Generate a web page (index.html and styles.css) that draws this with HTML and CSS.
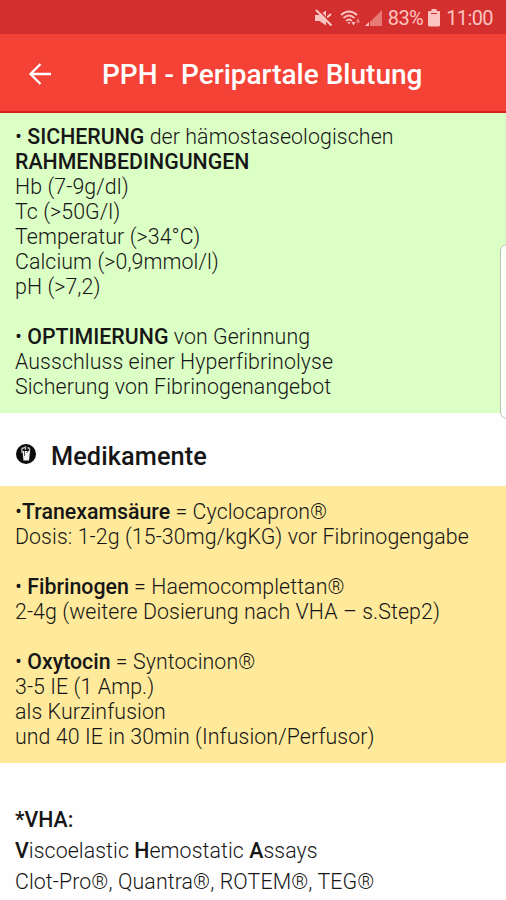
FILE: index.html
```html
<!DOCTYPE html>
<html lang="de">
  <head>
    <meta charset="UTF-8" />
    <title>PPH - Peripartale Blutung</title>
    <link rel="stylesheet" href="styles.css">
  </head>

  <body>
    <div class="status-bar">
      <svg class="icon-mute" width="18" height="18" viewBox="0 0 18 18">
        <path d="M0 6h4.500L11 1.500v15L4.500 12H0z" fill="currentColor" />
        <path d="M12 8.500l4-3.500" stroke="currentColor" stroke-width="2" />
        <path d="M2.500 0l15 15" stroke="#d32f2f" stroke-width="1.500" />
        <path d="M1 1l15.500 15.500" stroke="currentColor" stroke-width="2.200" />
      </svg>
      <svg class="icon-wifi" width="22" height="18" viewBox="0 0 22 18">
        <g fill="none" stroke="currentColor" stroke-width="1.700">
          <path d="M1 6q8-7 16 0" />
          <path d="M3.500 9q5.500-5 11 0" />
          <path d="M6 12q3-3 6 0" />
        </g>
        <path d="M7.500 13h3L9 15.500zM11.500 13h4l-2 3.500z" fill="currentColor" />
        <path d="M16 12.500l2-3.500 2 3.500-2 2z" fill="currentColor" opacity=".5" />
      </svg>
      <svg class="icon-signal" width="17" height="18" viewBox="0 0 17 18">
        <path d="M17 1v16H5V13z" fill="currentColor" opacity=".5" />
        <path d="M4 13v4H0z" fill="currentColor" />
      </svg>
      <span class="battery-level">83%</span>
      <svg class="icon-battery" width="12" height="18" viewBox="0 0 12 18">
        <path d="M3.500 0h5v2H11q1 0 1 1v13q0 1.500-1.500 1.500h-9Q0 17.500 0 16V3q0-1 1-1h2.500z" fill="currentColor" />
        <path d="M3 4.500h6" stroke="#d32f2f" stroke-width="1" />
      </svg>
      <span class="clock">11:00</span>
    </div>

    <header class="app-bar">
      <svg class="icon-back" width="24" height="24" viewBox="0 0 24 24">
        <path d="M23 12H2.500M12.500 2L2.500 12l10 10" fill="none" stroke="#fff" stroke-width="2.300" />
      </svg>
      <h1 class="title">PPH - Peripartale Blutung</h1>
    </header>

    <section class="panel panel-green">
      <p>• <b>SICHERUNG</b> der hämostaseologischen</p>
      <p><b>RAHMENBEDINGUNGEN</b></p>
      <p>Hb (7-9g/dl)</p>
      <p>Tc (&gt;50G/l)</p>
      <p>Temperatur (&gt;34°C)</p>
      <p>Calcium (&gt;0,9mmol/l)</p>
      <p>pH (&gt;7,2)</p>
      <p class="spaced">• <b>OPTIMIERUNG</b> von Gerinnung</p>
      <p>Ausschluss einer Hyperfibrinolyse</p>
      <p>Sicherung von Fibrinogenangebot</p>
    </section>

    <h2 class="section-title">
      <svg class="icon-med" width="20" height="20" viewBox="0 0 20 20">
        <circle cx="10" cy="10" r="10" fill="#0b0b0b" />
        <path d="M6.500 7h7.500l-1 9.500H7.500z" fill="#f4f4f4" />
        <path d="M6 9V4.500L9.500 3v3M11.500 3.500l2 1v2.500" fill="none" stroke="#b8b8b8" stroke-width="1.400" />
        <path d="M8.500 7v5M10.500 9l1.500-2" stroke="#333" stroke-width=".8" />
      </svg>
      <span>Medikamente</span>
    </h2>

    <section class="panel panel-yellow">
      <p>•<b>Tranexamsäure</b> = Cyclocapron®</p>
      <p>Dosis: 1-2g (15-30mg/kgKG) vor Fibrinogengabe</p>
      <p class="spaced">• <b>Fibrinogen</b> = Haemocomplettan®</p>
      <p>2-4g (weitere Dosierung nach VHA – s.Step2)</p>
      <p class="spaced">• <b>Oxytocin</b> = Syntocinon®</p>
      <p>3-5 IE (1 Amp.)</p>
      <p>als Kurzinfusion</p>
      <p>und 40 IE in 30min (Infusion/Perfusor)</p>
    </section>

    <section class="footnote">
      <p><b>*VHA:</b></p>
      <p><b>V</b>iscoelastic <b>H</b>emostatic <b>A</b>ssays</p>
      <p>Clot-Pro®, Quantra®, ROTEM®, TEG®</p>
    </section>

    <div class="edge-handle"></div>
  </body>
</html>
```

FILE: styles.css
```css
body {
  margin: 0;
  height: 900px;
  overflow: hidden;
  position: relative;
  background: #fefefe;
  color: #161616;
  font-family: Roboto, sans-serif;
  font-size: 21.33px;
  font-weight: 300;
  line-height: 25px;
  letter-spacing: 0.09px;
}

p {
  margin: 0;
  white-space: nowrap;
}

b {
  font-weight: 500;
  letter-spacing: 0;
}

.status-bar {
  display: flex;
  align-items: center;
  justify-content: flex-end;
  height: 34px;
  padding: 2px 13px 0 0;
  box-sizing: border-box;
  background: #d32f2f;
  color: #fbc4c0;
  font-size: 20px;
  font-weight: 400;
  letter-spacing: -0.6px;
}

.icon-wifi {
  margin-left: 7px;
}

.icon-signal {
  margin-left: 3px;
}

.battery-level {
  margin-left: 6px;
}

.icon-battery {
  margin-left: 5px;
}

.clock {
  margin-left: 6px;
}

.app-bar {
  display: flex;
  align-items: center;
  height: 79px;
  padding: 0 28px;
  box-sizing: border-box;
  background: #f44336;
  border-bottom: 2px solid #d8201a;
}

.icon-back {
  margin-top: 2px;
}

.title {
  margin: 4px 0 0 50px;
  color: #fff;
  font-size: 28px;
  font-weight: 500;
  line-height: 32px;
  letter-spacing: 0;
  white-space: nowrap;
}

.panel-green {
  padding: 11px 15px 14px;
  background: #dcffc5;
}

.panel-yellow {
  padding: 13px 15px 14px;
  background: #ffe99b;
}

.spaced {
  margin-top: 25px;
}

.section-title {
  display: flex;
  align-items: center;
  gap: 15px;
  height: 73px;
  margin: 0;
  padding: 14px 16px 0;
  box-sizing: border-box;
  font-size: 25.3px;
  font-weight: 500;
  letter-spacing: 0.1px;
}

.icon-med {
  margin-top: -5px;
}

.footnote {
  padding: 41px 15px 0;
  line-height: 31px;
}

/* Samsung edge panel handle */
.edge-handle {
  position: absolute;
  top: 244px;
  right: -8px;
  width: 12px;
  height: 173px;
  border: 1px solid #b9c4b4;
  border-radius: 7px;
  background: rgba(255, 255, 255, 0.85);
}
```
